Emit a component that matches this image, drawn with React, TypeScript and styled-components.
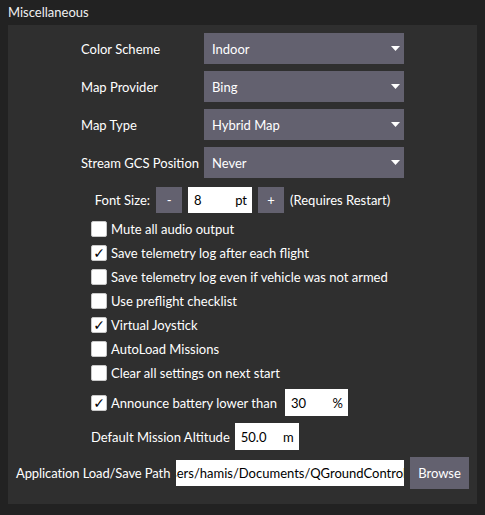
import React from "react";
import styled, { createGlobalStyle } from "styled-components";

const Global = createGlobalStyle`
  html, body { margin: 0; padding: 0; background: #222222; }
  body { font-family: Lato, "Open Sans", sans-serif; font-size: 13px; color: #ffffff; }
  * { box-sizing: border-box; }
`;

const Page = styled.div`
  width: 485px;
  height: 515px;
  padding: 0 8px;
  background: #222222;
`;

const Title = styled.div`
  height: 25px;
  line-height: 24px;
  font-size: 13px;
  color: #f0f0f0;
`;

const Panel = styled.div`
  background: #2f2f2f;
  padding: 8px 8px 15px 8px;
  display: flex;
  flex-direction: column;
`;

const Column = styled.div`
  align-self: center;
  width: 323px;
  display: flex;
  flex-direction: column;
`;

const ComboGrid = styled.div`
  display: grid;
  grid-template-columns: 123px 200px;
  grid-auto-rows: 31px;
  row-gap: 7px;
  align-items: center;
`;

const Label = styled.span<{ $tight?: boolean }>`
  white-space: nowrap;
  color: #ffffff;
  flex-shrink: 0;
  letter-spacing: ${(p) => (p.$tight ? "-0.1px" : "normal")};
`;

const Combo = styled.div`
  height: 31px;
  background: #63616f;
  display: flex;
  align-items: center;
  justify-content: space-between;
  padding: 0 4px 0 8px;
`;

const Arrow = styled.svg`
  width: 9px;
  height: 5px;
`;

const FontRow = styled.div`
  margin-top: 9px;
  height: 26px;
  display: flex;
  align-items: center;
  justify-content: center;
  gap: 6px;
`;

const SmallButton = styled.div<{ $w: number; $h: number }>`
  width: ${(p) => p.$w}px;
  height: ${(p) => p.$h}px;
  flex-shrink: 0;
  background: #63616f;
  color: #ffffff;
  display: flex;
  align-items: center;
  justify-content: center;
`;

const Field = styled.div<{ $w: number; $h: number }>`
  width: ${(p) => p.$w}px;
  height: ${(p) => p.$h}px;
  flex-shrink: 0;
  background: #ffffff;
  color: #000000;
  display: flex;
  align-items: center;
  justify-content: space-between;
  padding: 0 5px 0 6px;
  overflow: hidden;
  white-space: nowrap;
`;

const PathField = styled(Field)`
  justify-content: flex-end;
  padding: 0;
`;

const PathText = styled.span`
  margin-right: -2px;
`;

const CheckList = styled.div`
  margin-top: 4px;
  margin-left: 10px;
  display: flex;
  flex-direction: column;
`;

const CheckRow = styled.div<{ $h?: number; $mt?: number }>`
  height: ${(p) => p.$h ?? 24}px;
  margin-top: ${(p) => p.$mt ?? 0}px;
  display: flex;
  align-items: center;
  gap: 4px;
`;

const Box = styled.div`
  width: 16px;
  height: 16px;
  flex-shrink: 0;
  background: #ffffff;
  border: 1px solid #c8c8c8;
  border-radius: 2px;
  display: flex;
  align-items: center;
  justify-content: center;
  color: #000000;
  font-family: "DejaVu Sans", sans-serif;
  font-size: 14px;
  font-weight: bold;
  line-height: 1;
`;

const AnnounceField = styled(Field)`
  margin-left: 4px;
`;

const AltRow = styled.div`
  margin-top: 7px;
  margin-left: 10px;
  height: 27px;
  display: flex;
  align-items: center;
  gap: 5px;
`;

const PathRow = styled.div`
  margin-top: 7px;
  height: 32px;
  display: flex;
  align-items: center;
  justify-content: space-between;
`;

const combos: [string, string][] = [
  ["Color Scheme", "Indoor"],
  ["Map Provider", "Bing"],
  ["Map Type", "Hybrid Map"],
  ["Stream GCS Position", "Never"],
];

const checks: [string, boolean][] = [
  ["Mute all audio output", false],
  ["Save telemetry log after each flight", true],
  ["Save telemetry log even if vehicle was not armed", false],
  ["Use preflight checklist", false],
  ["Virtual Joystick", true],
  ["AutoLoad Missions", false],
  ["Clear all settings on next start", false],
];

const Check = ({ on }: { on: boolean }) => <Box>{on ? "✓" : ""}</Box>;

export default function App() {
  return (
    <Page>
      <Global />
      <Title>Miscellaneous</Title>
      <Panel>
        <Column>
          <ComboGrid>
            {combos.map(([l, v]) => (
              <React.Fragment key={l}>
                <Label>{l}</Label>
                <Combo>
                  <span>{v}</span>
                  <Arrow viewBox="0 0 9 5">
                    <polygon points="0,0 9,0 4.5,5" fill="#ffffff" />
                  </Arrow>
                </Combo>
              </React.Fragment>
            ))}
          </ComboGrid>
          <FontRow>
            <Label>Font Size:</Label>
            <SmallButton $w={26} $h={26}>-</SmallButton>
            <Field $w={64} $h={26}>
              <span>8</span>
              <span>pt</span>
            </Field>
            <SmallButton $w={26} $h={26}>+</SmallButton>
            <Label>(Requires Restart)</Label>
          </FontRow>
          <CheckList>
            {checks.map(([l, on]) => (
              <CheckRow key={l}>
                <Check on={on} />
                <Label>{l}</Label>
              </CheckRow>
            ))}
            <CheckRow $h={27} $mt={4}>
              <Check on={true} />
              <Label>Announce battery lower than</Label>
              <AnnounceField $w={63} $h={27}>
                <span>30</span>
                <span>%</span>
              </AnnounceField>
            </CheckRow>
          </CheckList>
          <AltRow>
            <Label>Default Mission Altitude</Label>
            <Field $w={64} $h={27}>
              <span>50.0</span>
              <span>m</span>
            </Field>
          </AltRow>
        </Column>
        <PathRow>
          <Label $tight>Application Load/Save Path</Label>
          <PathField $w={228} $h={26}>
            <PathText>sers/hamis/Documents/QGroundControl</PathText>
          </PathField>
          <SmallButton $w={59} $h={32}>Browse</SmallButton>
        </PathRow>
      </Panel>
    </Page>
  );
}
